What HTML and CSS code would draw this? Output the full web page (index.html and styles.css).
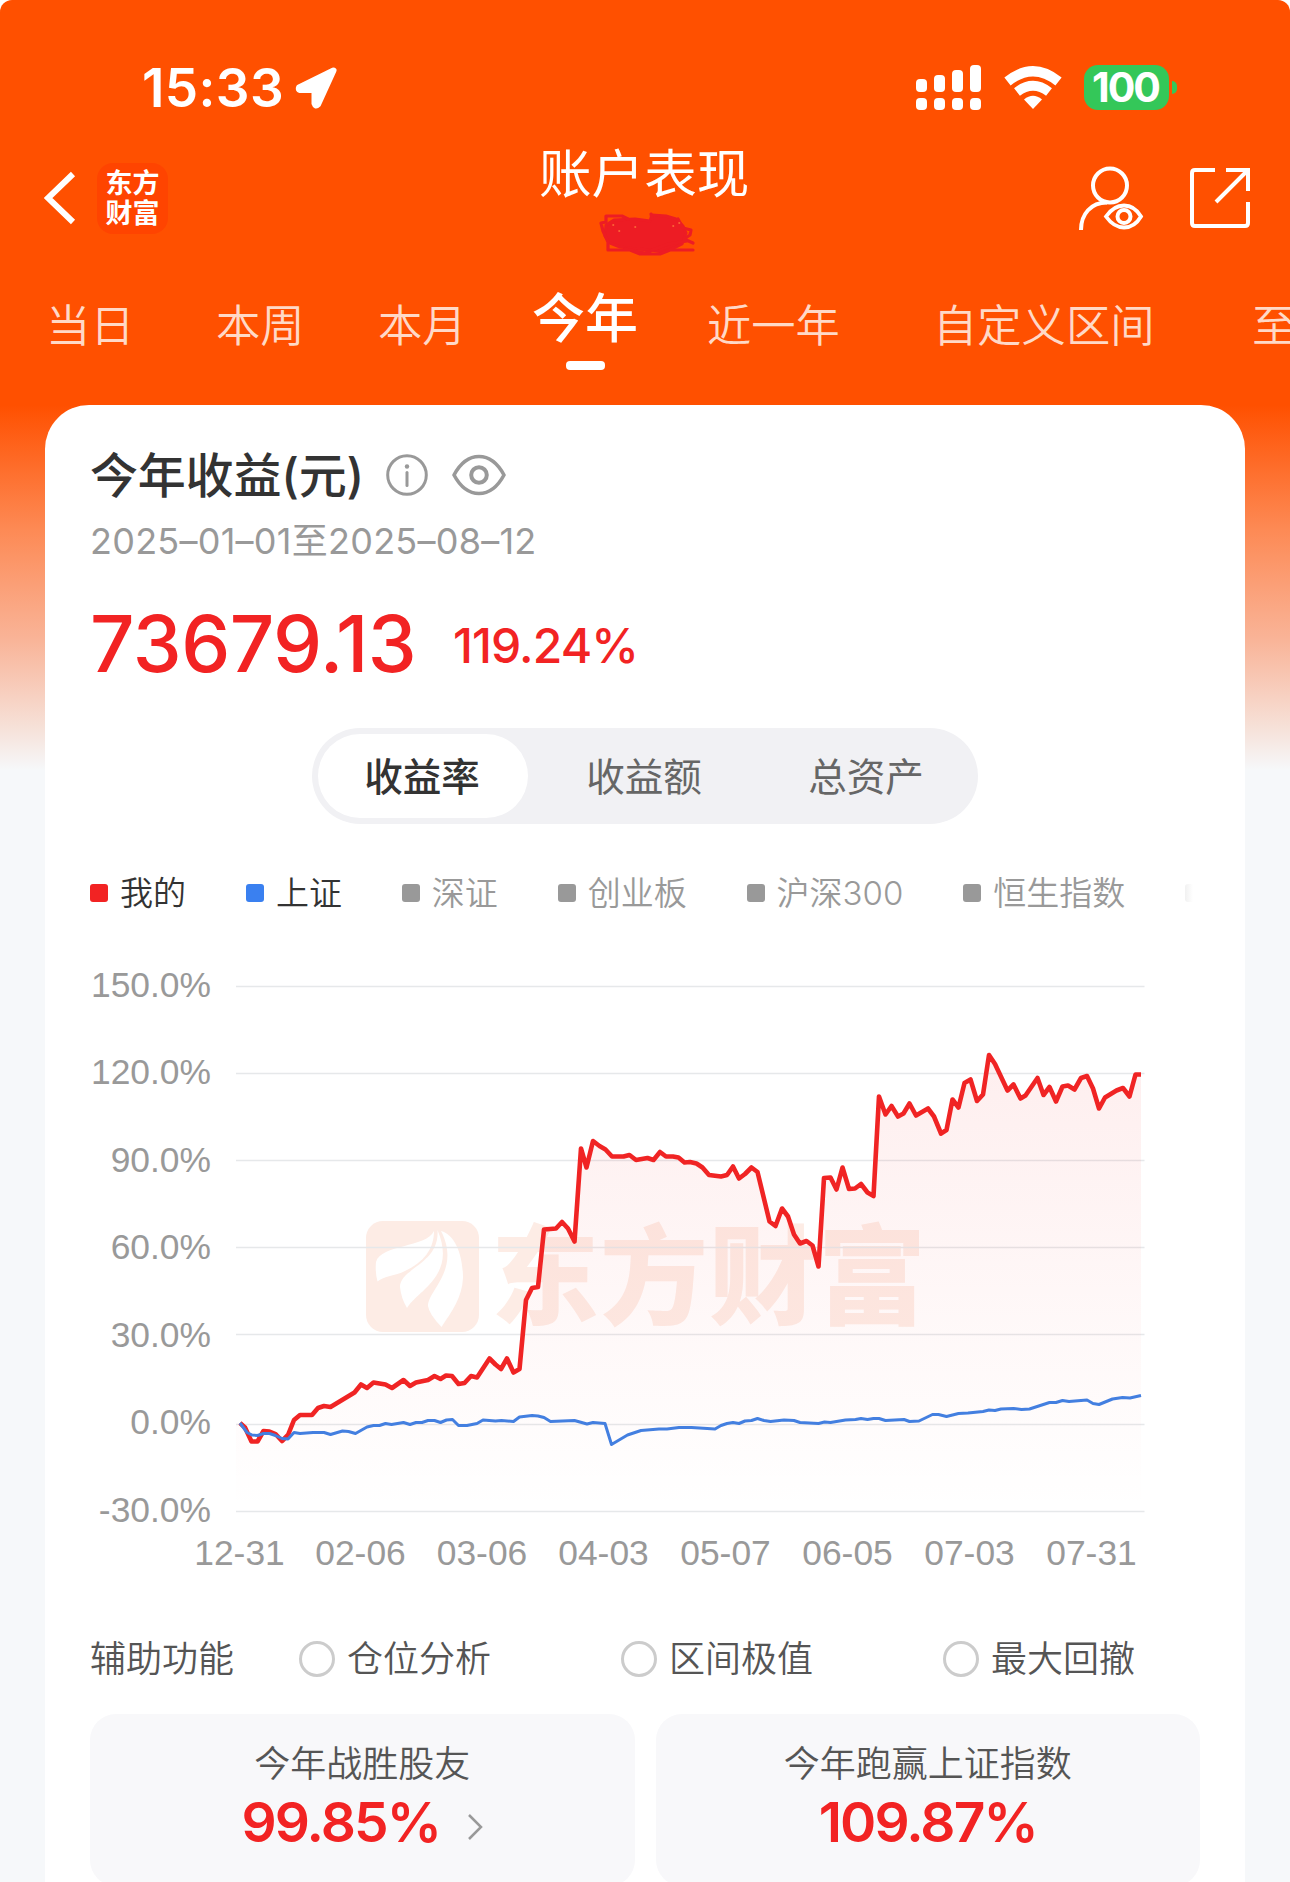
FILE: index.html
```html
<!doctype html>
<html lang="zh-CN">

<head>
    <meta charset="utf-8">
    <title>账户表现</title>
    <link rel="stylesheet" href="styles.css">
</head>

<body>
    <div class="page">
        <div class="status">
            <span class="time">15:33</span>
            <svg class="location" width="44" height="44" viewBox="0 0 44 44">
                <path d="M39.500 4.500 L5 21.500 Q4 23.500 6 24 H20.500 V37.500 Q21.500 41 24 38.500 Z" fill="#fff" stroke="#fff" stroke-width="6" stroke-linejoin="round" />
            </svg>
            <svg class="signal" width="65" height="45" viewBox="0 0 65 45" fill="#fff">
                <rect x="0" y="14" width="11" height="13" rx="4" />
                <rect x="18" y="10" width="11" height="17" rx="4" />
                <rect x="36" y="5" width="11" height="22" rx="4" />
                <rect x="54" y="0" width="11" height="27" rx="4" />
                <rect x="0" y="33" width="11" height="12" rx="4" />
                <rect x="18" y="33" width="11" height="12" rx="4" />
                <rect x="36" y="33" width="11" height="12" rx="4" />
                <rect x="54" y="33" width="11" height="12" rx="4" />
            </svg>
            <svg class="wifi" width="58" height="43" viewBox="0 0 58 43">
                <path d="M3.500 15.500 Q29 -5 54.500 15.500" fill="none" stroke="#fff" stroke-width="10" />
                <path d="M13 26 Q29 13.500 45 26" fill="none" stroke="#fff" stroke-width="9.500" />
                <path d="M20 33.500 Q29 26 38 33.500 L29 43 Z" fill="#fff" />
            </svg>
            <div class="battery">100</div>
            <div class="battery-tip"></div>
        </div>

        <div class="nav">
            <div class="nav-left">
                <svg width="32" height="54" viewBox="0 0 32 54">
                    <path d="M29 3 L4 27 L29 51" fill="none" stroke="#fff" stroke-width="6" />
                </svg>
                <div class="brand">东方<br>财富</div>
            </div>
            <div class="nav-title">
                <h1>账户表现</h1>
                <svg class="scribble" width="120" height="68" viewBox="0 2 120 68" stroke="#ed1c24" stroke-linejoin="round" stroke-linecap="round">
                    <path d="M16 25 L24 20 L45 19 L60 21 L62 15 L76 16 L86 19 L93 26 L96 33 L92 44 L84 48 L72 52 L62 50 L46 49 L30 47 L20 43 L15 36 Z" fill="#ed1c24" stroke-width="3" />
                    <path d="M38 19 L32 16 H16 V22 L11 23 L13 31 L18 42 V50 H40 L50 54 H70 L80 50 H103 M61 14 L62 19 M88 19 L93 28 L101 30 L100 35 L94 39 L103 43 M35 49 L55 53 L78 44 L97 41" fill="none" stroke-width="3.200" />
                    <path d="M23 25 h.5 M29 31 h.5 M45 27 h.5 M83 26 h.5 M89 23 h.5" stroke="#ff7a3c" stroke-width="1.600" />
                </svg>
            </div>
            <div class="nav-right">
                <svg width="66" height="66" viewBox="0 0 66 66" fill="none" stroke="#fff" stroke-width="4">
                    <circle cx="32" cy="20.500" r="17" />
                    <path d="M3 65 C3 49 13 37.500 29 37.500" />
                    <path d="M28 51.500 C34 43 40 40.500 46 40.500 S58 43 63 51.500 C58 60 52 62.500 46 62.500 S34 60 28 51.500 Z" stroke-width="3.800" />
                    <circle cx="46" cy="51.500" r="6.500" stroke-width="4" />
                </svg>
                <svg width="60" height="60" viewBox="0 0 60 60" fill="none" stroke="#fff" stroke-width="4">
                    <path d="M25 2 H5 Q2 2 2 5 V55 Q2 58 5 58 H55 Q58 58 58 55 V34" />
                    <path d="M36 2 H58 V23 M57 3 L26 34" />
                </svg>
            </div>
        </div>

        <div class="tabs">
            <div class="tab">当日</div>
            <div class="tab">本周</div>
            <div class="tab">本月</div>
            <div class="tab active">今年</div>
            <div class="tab">近一年</div>
            <div class="tab">自定义区间</div>
            <div class="tab">至</div>
        </div>

        <div class="card">
            <div class="head">
                <h2>今年收益(元)</h2>
                <svg class="info" width="42" height="42" viewBox="0 0 42 42">
                    <circle cx="21" cy="21" r="19.300" fill="none" stroke="#999" stroke-width="3" />
                    <circle cx="21" cy="12.500" r="2.200" fill="#999" />
                    <path d="M21 18.500 V31.500" stroke="#999" stroke-width="3" stroke-linecap="round" />
                </svg>
                <svg class="eye" width="54" height="42" viewBox="0 0 54 42" fill="none" stroke="#999">
                    <path d="M2 21 C9 8 18 2.500 27 2.500 S45 8 52 21 C45 34 36 39.500 27 39.500 S9 34 2 21 Z" stroke-width="3.600" stroke-linejoin="round" />
                    <circle cx="27" cy="21" r="7.800" stroke-width="4" />
                </svg>
            </div>
            <div class="date">2025–01–01至2025–08–12</div>
            <div class="profit">
                <span class="amount">73679.13</span>
                <span class="rate">119.24%</span>
            </div>

            <div class="segment">
                <div class="seg active">收益率</div>
                <div class="seg">收益额</div>
                <div class="seg">总资产</div>
            </div>

            <div class="legend">
                <div class="item mine">我的</div>
                <div class="item sh">上证</div>
                <div class="item">深证</div>
                <div class="item">创业板</div>
                <div class="item">沪深300</div>
                <div class="item">恒生指数</div>
                <div class="item more"></div>
            </div>

            <svg class="chart" width="1110" height="620" viewBox="90 960 1110 620">
                <defs>
                    <linearGradient id="area" gradientUnits="userSpaceOnUse" x1="0" y1="1055" x2="0" y2="1512">
                        <stop offset="0" stop-color="#f22323" stop-opacity=".075" />
                        <stop offset="1" stop-color="#f22323" stop-opacity="0" />
                    </linearGradient>
                </defs>

                <g class="watermark">
                    <rect x="366" y="1221" width="113" height="111" rx="17" />
                    <path class="petal" d="M434 1231 C426 1248 381 1244 376 1262 Q375 1272 377.500 1281.500 C384 1276 395 1276 405 1271 C424 1262 434 1249 434 1231 Z" />
                    <path class="petal" d="M437.500 1230 C440 1264 400 1268 400 1287 Q401 1298 407 1308 C418 1290 457 1276 437.500 1230 Z" />
                    <path class="petal" d="M441 1231 C456 1235 463 1257 463 1278 C462 1298 452 1311 441.500 1327 Q429 1314 428 1306 C428 1290 461 1270 441 1231 Z" />
                    <text x="491" y="1316">东方财富</text>
                </g>

                <path class="grid" d="M236 986.500 H1144.500 M236 1073.500 H1144.500 M236 1160.500 H1144.500 M236 1247.500 H1144.500 M236 1334.500 H1144.500 M236 1424.500 H1144.500 M236 1511.500 H1144.500" />

                <g class="ylabels">
                    <text x="211" y="996.500">150.0%</text>
                    <text x="211" y="1084">120.0%</text>
                    <text x="211" y="1171.500">90.0%</text>
                    <text x="211" y="1259">60.0%</text>
                    <text x="211" y="1346.500">30.0%</text>
                    <text x="211" y="1434">0.0%</text>
                    <text x="211" y="1521.500">-30.0%</text>
                </g>
                <g class="xlabels">
                    <text x="239.500" y="1564.500">12-31</text>
                    <text x="360.500" y="1564.500">02-06</text>
                    <text x="482" y="1564.500">03-06</text>
                    <text x="603.500" y="1564.500">04-03</text>
                    <text x="725.500" y="1564.500">05-07</text>
                    <text x="847.500" y="1564.500">06-05</text>
                    <text x="969.500" y="1564.500">07-03</text>
                    <text x="1091.500" y="1564.500">07-31</text>
                </g>

                <polygon fill="url(#area)" points="236,1512 236,1423 240,1423 245,1427.5 251.5,1441.5 257.5,1441.5 263.5,1431 269.5,1431.5 275.5,1434 282,1441 288,1435 294,1420 300,1415 312,1415 318,1408 324,1406 330.5,1407 354.5,1392.5 361,1384.5 367,1388 373.5,1382.5 385.5,1384.5 392,1388 403.5,1380 410,1386 416,1382.5 428,1380 434.5,1376 440.5,1379 446,1375.5 452,1376 458.5,1384 464.5,1383 471,1376 477,1377.5 489.5,1358.5 495.5,1364.5 501,1369 507,1358.5 513.5,1372.5 519.5,1369 526,1300 532,1288 538,1287 544,1229.5 556,1228.5 562,1222 568,1228.5 574.5,1241.5 581,1148.5 586.5,1167.5 593,1141 599.5,1146 605.5,1149.5 612,1156.5 623.5,1156.5 629.5,1155 636,1160 647.5,1158 653.5,1160 660,1152 666,1156.5 673,1156.5 678.5,1157.5 684.5,1162.5 690,1162 696.5,1163.5 702.5,1167.5 709,1175 721,1176.5 727,1175 733,1166.5 739,1178.5 745,1174 751.5,1167.5 757.5,1172 769.5,1221.5 775.5,1226 782,1208.5 788,1216.5 794,1234.5 800,1243.5 806.5,1241 812.5,1245.5 818.5,1266.5 824,1178 830.5,1177.5 836.5,1189.5 842.5,1167.5 849,1189 855,1188.5 861,1184 867.5,1192.5 873.5,1196 879,1096.5 885.5,1114.5 891.5,1106 898,1116.5 903.5,1113.5 909.5,1103.5 916,1115.5 928,1108.5 934,1116.5 941,1133.5 946.5,1130 952.5,1099.5 958.5,1107.5 964.5,1083 970.5,1079.5 977,1101 983,1094.5 989,1055 995,1064 1007.5,1090.5 1013.5,1084.5 1020.5,1098.5 1025.5,1095.5 1037.5,1078 1043.5,1095 1049.5,1087 1056,1101.5 1062.5,1086.5 1068,1085.5 1074.5,1089.5 1081,1078 1087,1076 1093,1088.5 1099,1108.5 1105,1097.5 1116.5,1090.5 1123,1088 1129.5,1096.5 1135.5,1074.5 1141,1074.5 1141,1512" />
                <polyline class="line red" points="240,1423 245,1427.5 251.5,1441.5 257.5,1441.5 263.5,1431 269.5,1431.5 275.5,1434 282,1441 288,1435 294,1420 300,1415 312,1415 318,1408 324,1406 330.5,1407 354.5,1392.5 361,1384.5 367,1388 373.5,1382.5 385.5,1384.5 392,1388 403.5,1380 410,1386 416,1382.5 428,1380 434.5,1376 440.5,1379 446,1375.5 452,1376 458.5,1384 464.5,1383 471,1376 477,1377.5 489.5,1358.5 495.5,1364.5 501,1369 507,1358.5 513.5,1372.5 519.5,1369 526,1300 532,1288 538,1287 544,1229.5 556,1228.5 562,1222 568,1228.5 574.5,1241.5 581,1148.5 586.5,1167.5 593,1141 599.5,1146 605.5,1149.5 612,1156.5 623.5,1156.5 629.5,1155 636,1160 647.5,1158 653.5,1160 660,1152 666,1156.5 673,1156.5 678.5,1157.5 684.5,1162.5 690,1162 696.5,1163.5 702.5,1167.5 709,1175 721,1176.5 727,1175 733,1166.5 739,1178.5 745,1174 751.5,1167.5 757.5,1172 769.5,1221.5 775.5,1226 782,1208.5 788,1216.5 794,1234.5 800,1243.5 806.5,1241 812.5,1245.5 818.5,1266.5 824,1178 830.5,1177.5 836.5,1189.5 842.5,1167.5 849,1189 855,1188.5 861,1184 867.5,1192.5 873.5,1196 879,1096.5 885.5,1114.5 891.5,1106 898,1116.5 903.5,1113.5 909.5,1103.5 916,1115.5 928,1108.5 934,1116.5 941,1133.5 946.5,1130 952.5,1099.5 958.5,1107.5 964.5,1083 970.5,1079.5 977,1101 983,1094.5 989,1055 995,1064 1007.5,1090.5 1013.5,1084.5 1020.5,1098.5 1025.5,1095.5 1037.5,1078 1043.5,1095 1049.5,1087 1056,1101.5 1062.5,1086.5 1068,1085.5 1074.5,1089.5 1081,1078 1087,1076 1093,1088.5 1099,1108.5 1105,1097.5 1116.5,1090.5 1123,1088 1129.5,1096.5 1135.5,1074.5 1141,1074.5" />
                <polyline class="line blue" points="240,1423 247,1432.5 252,1435 257.5,1435.5 263.5,1433.5 269.5,1433.5 275.5,1435.5 282,1438.5 288,1439 294,1432.5 300,1433.5 313,1432.5 324,1432.5 330.5,1434.5 342.5,1431 348.5,1431.5 355.5,1433.5 367,1427 373.5,1425.5 379.5,1425.5 385.5,1423.5 391.5,1424.5 403.5,1422.5 410,1424.5 416,1422.5 422,1422.5 428,1420.5 434.5,1420.5 440.5,1422.5 446.5,1420 452.5,1419.5 458.5,1425.5 467,1425.5 477,1423.5 483,1420 495.5,1421 501.5,1420.5 513.5,1421.5 519.5,1417 532,1415.5 538,1416 544,1417.5 550.5,1421.5 574.5,1420.5 587,1424 593,1422.5 605,1423.5 611.5,1444.5 627.5,1435 641,1430.5 659,1429 667,1429 679,1427.5 691.5,1427.5 715,1429 721,1425.5 727,1423.5 733,1422.5 739,1423.5 745,1421 751.5,1420.5 757.5,1418.5 764,1420.5 770.5,1421.5 784,1420 794,1420.5 800,1422.5 818.5,1423.5 824.5,1422 830.5,1422.5 845.5,1420 855.5,1419.5 861,1418.5 867.5,1419.5 873.5,1418.5 879,1418.5 885.5,1420.5 904,1419.5 909.5,1421.5 919,1421 932.5,1414.5 938.5,1414.5 946.5,1416.5 958.5,1413.5 968,1413 983,1411.5 989,1410 995,1410.5 1001,1409 1013.5,1408.5 1021.5,1409.5 1029.5,1409 1049.5,1402.5 1056,1402.5 1062.5,1400.5 1069,1401.5 1087,1400 1093,1403.5 1099,1404.5 1112.5,1399 1122.5,1397.5 1130,1398 1141,1395.5" />
            </svg>

            <div class="assist">
                <span>辅助功能</span>
                <div class="radio">仓位分析</div>
                <div class="radio">区间极值</div>
                <div class="radio">最大回撤</div>
            </div>

            <div class="stats">
                <div class="stat">
                    <div class="stat-name">今年战胜股友</div>
                    <div class="stat-value">
                        <span>99.85%</span>
                        <svg width="16" height="28" viewBox="0 0 16 28">
                            <path d="M2 2 L14 14 L2 26" fill="none" stroke="#999" stroke-width="2.500" />
                        </svg>
                    </div>
                </div>
                <div class="stat">
                    <div class="stat-name">今年跑赢上证指数</div>
                    <div class="stat-value"><span>109.87%</span></div>
                </div>
            </div>
        </div>
    </div>
</body>

</html>
```
FILE: styles.css
```css
html,
body {
    margin: 0;
    padding: 0;
    background: #fff;
}

* {
    box-sizing: border-box;
}

h1,
h2 {
    margin: 0;
}

svg {
    display: block;
    flex: none;
}

.page {
    width: 1290px;
    height: 1882px;
    overflow: hidden;
    border-radius: 12px 12px 0 0;
    background: linear-gradient(#ff5000 405px, #fd8a55 530px, #f9b498 640px, #f6e2da 730px, #f6f8fa 770px);
    font-family: Inter, "Noto Sans CJK SC", sans-serif;
    color: #333;
}

/* status bar */
.status {
    display: flex;
    align-items: center;
    height: 114px;
    padding: 60px 113px 0 142px;
    color: #fff;
}

.time {
    width: 152px;
    padding-top: 2px;
    font-size: 53px;
    font-weight: 600;
    letter-spacing: 0.4px;
    white-space: nowrap;
}

.location {
    margin-top: 2px;
}

.signal {
    margin-left: auto;
}

.wifi {
    margin-left: 23px;
}

.battery {
    width: 85px;
    height: 45px;
    margin-left: 22px;
    padding-right: 2px;
    border-radius: 14px;
    background: #34c759;
    font-size: 41px;
    line-height: 45px;
    font-weight: 700;
    letter-spacing: -2px;
    text-align: center;
}

.battery-tip {
    width: 5px;
    height: 13px;
    margin-left: 3px;
    border-radius: 0 5px 5px 0;
    background: #34c759;
}

/* nav bar */
.nav {
    display: grid;
    grid-template-columns: 1fr 212px 1fr;
    height: 168px;
    padding: 0 40px 0 44px;
    color: #fff;
}

.nav-left,
.nav-right {
    display: flex;
    align-items: center;
}

.nav-right {
    justify-content: flex-end;
    gap: 46px;
}

.brand {
    width: 71px;
    height: 71px;
    margin-left: 21px;
    padding-top: 6px;
    border-radius: 16px;
    background: #ff4400;
    font-size: 27px;
    line-height: 30px;
    font-weight: 700;
    text-align: center;
}

.nav-title {
    padding-top: 30px;
}

.nav-title h1 {
    margin-left: -2px;
    font-size: 52.6px;
    line-height: 60px;
    font-weight: 400;
    white-space: nowrap;
}

.scribble {
    margin: -2px 0 0 49px;
}

/* period tabs */
.tabs {
    display: grid;
    grid-template-columns: 170px 162px 154px 175px 226px 319px 88px;
    height: 123px;
    padding-left: 46px;
}

.tab {
    padding-top: 22px;
    font-size: 44.3px;
    line-height: 44px;
    font-weight: 350;
    white-space: nowrap;
    color: #ffd9c7;
}

.tab.active {
    padding-top: 8px;
    font-size: 53px;
    line-height: 58px;
    font-weight: 500;
    color: #fff;
}

.tab.active::after {
    content: "";
    display: block;
    width: 39px;
    height: 9px;
    margin: 13px 0 0 34px;
    border-radius: 4px;
    background: #fff;
}

/* main card */
.card {
    height: 1500px;
    margin: 0 45px;
    padding: 40px 45px 0;
    border-radius: 44px 44px 0 0;
    background: #fff;
}

.head {
    display: flex;
    align-items: center;
    height: 60px;
}

.head h2 {
    width: 296px;
    padding-top: 2px;
    font-size: 48px;
    line-height: 60px;
    font-weight: 500;
    letter-spacing: -0.2px;
    white-space: nowrap;
}

.eye {
    margin-left: 24px;
}

.date {
    margin-top: 14px;
    font-size: 36px;
    line-height: 44px;
    letter-spacing: 0.25px;
    white-space: nowrap;
    color: #999;
}

.profit {
    display: flex;
    align-items: center;
    height: 80px;
    margin-top: 40px;
    color: #f22323;
}

.amount {
    width: 363px;
    font-size: 78px;
    font-weight: 500;
    letter-spacing: -0.5px;
}

.rate {
    padding-top: 5px;
    font-size: 48px;
    font-weight: 500;
    letter-spacing: -0.9px;
}

.segment {
    display: flex;
    justify-content: space-between;
    width: 666px;
    height: 96px;
    margin: 45px auto 0;
    padding: 6px;
    border-radius: 48px;
    background: #f1f1f4;
}

.seg {
    width: 210px;
    padding-right: 2px;
    border-radius: 42px;
    font-size: 38.6px;
    line-height: 86px;
    text-align: center;
    color: #666;
}

.seg.active {
    background: #fff;
    font-weight: 500;
    color: #333;
}

.legend {
    display: flex;
    align-items: center;
    gap: 59.9px;
    height: 40px;
    margin-top: 49px;
    overflow: hidden;
}

.item {
    display: flex;
    flex: none;
    align-items: center;
    gap: 12px;
    font-size: 33px;
    line-height: 40px;
    font-weight: 350;
    color: #999;
}

.item::before {
    content: "";
    width: 18px;
    height: 18px;
    border-radius: 3px;
    background: #999;
}

.item.mine,
.item.sh {
    color: #333;
}

.item.mine::before {
    background: #f22323;
}

.item.sh::before {
    background: #3a80f0;
}

.item.more::before {
    background: linear-gradient(90deg, #f1f1f1, #fff 8px);
}

/* chart */
.chart {
    margin-top: 47px;
    font-family: "Liberation Sans", Arial, sans-serif;
    font-size: 35.4px;
    fill: #999;
}

.ylabels {
    text-anchor: end;
}

.xlabels {
    text-anchor: middle;
}

.grid {
    stroke: #e6e8ea;
    stroke-width: 1.4;
}

.watermark {
    fill: #fdece5;
}

.watermark text {
    font-family: "Noto Sans CJK SC", sans-serif;
    font-size: 108px;
    font-weight: 900;
    letter-spacing: 1px;
}

.petal {
    fill: #fff;
}

.line {
    fill: none;
    stroke-linejoin: round;
}

.red {
    stroke: #f02424;
    stroke-width: 4.6;
}

.blue {
    stroke: #437fe0;
    stroke-width: 3;
}

/* helper switches */
.assist {
    display: flex;
    align-items: center;
    height: 40px;
    margin-top: 59px;
    font-size: 36px;
    line-height: 42px;
    font-weight: 350;
    color: #555;
}

.assist span {
    flex: none;
    width: 209px;
}

.radio {
    display: flex;
    align-items: center;
    gap: 12px;
    width: 322px;
    flex: none;
}

.radio::before {
    content: "";
    width: 30px;
    height: 30px;
    border: 3px solid #ccc;
    border-radius: 50%;
}

.stats {
    display: grid;
    grid-template-columns: 1fr 1fr;
    gap: 21px;
    margin-top: 35px;
}

.stat {
    height: 172px;
    padding-top: 28px;
    border-radius: 26px;
    background: #f8f8fa;
    text-align: center;
}

.stat-name {
    font-size: 36px;
    line-height: 44px;
    font-weight: 350;
    color: #555;
}

.stat-value {
    display: flex;
    align-items: center;
    justify-content: center;
    gap: 27px;
    height: 60px;
    margin-top: 6px;
    font-size: 55px;
    font-weight: 600;
    letter-spacing: -1.9px;
    color: #f22323;
}

.stat-value svg {
    margin-top: 10px;
}
```
